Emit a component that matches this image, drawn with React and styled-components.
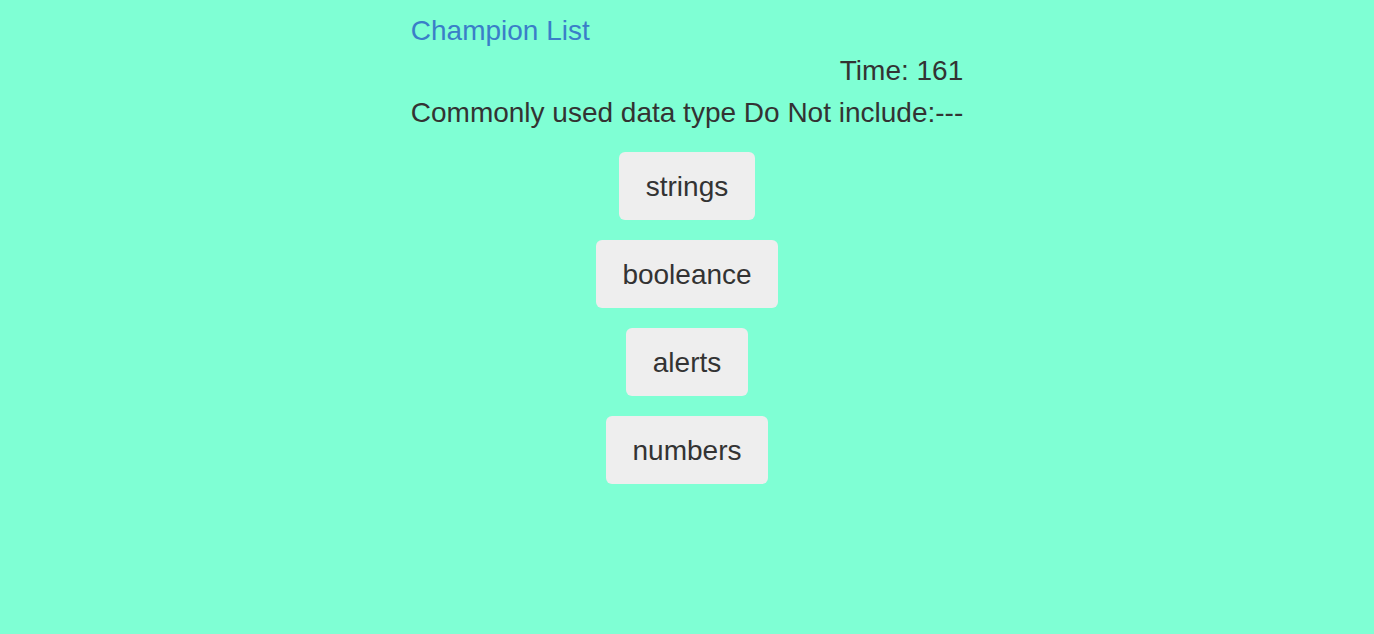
import React from "react";
import styled, { createGlobalStyle } from "styled-components";

const Global = createGlobalStyle`
  html, body { margin: 0; padding: 0; background: #7fffd4; }
  body { font-family: "Liberation Sans", Arial, sans-serif; color: #333; }
`;

const Page = styled.div`
  display: flex;
  justify-content: center;
  padding-top: 13px;
`;

const Wrap = styled.div`
  display: flex;
  flex-direction: column;
  font-size: 28px;
`;

const Title = styled.div`
  color: #3a7ec8;
  line-height: 36px;
`;

const Time = styled.div`
  text-align: right;
  line-height: 42px;
  margin-top: 1px;
`;

const Question = styled.div`
  line-height: 42px;
`;

const Options = styled.div`
  display: flex;
  flex-direction: column;
  align-items: center;
  gap: 20px;
  margin-top: 18px;
`;

const Option = styled.button`
  font-family: inherit;
  font-size: 28px;
  color: #333;
  background: #eeeeee;
  border: none;
  border-radius: 6px;
  height: 68px;
  padding: 2px 26.5px 0;
`;

const options = ["strings", "booleance", "alerts", "numbers"];

export default function App() {
  return (
    <>
      <Global />
      <Page>
        <Wrap>
          <Title>Champion List</Title>
          <Time>Time: 161</Time>
          <Question>Commonly used data type Do Not include:---</Question>
          <Options>
            {options.map((o) => (
              <Option key={o}>{o}</Option>
            ))}
          </Options>
        </Wrap>
      </Page>
    </>
  );
}
